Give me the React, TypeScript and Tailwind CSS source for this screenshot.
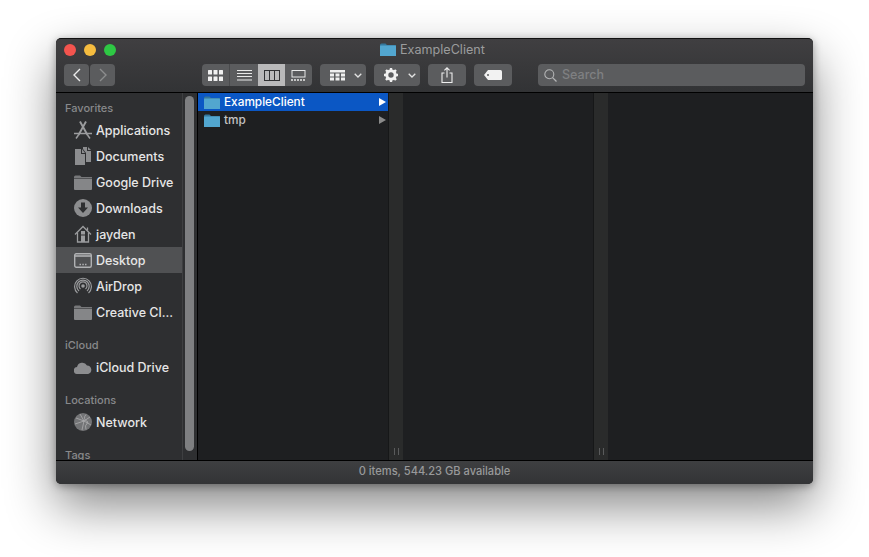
import type { ReactNode } from 'react'

const font = { fontFamily: 'Inter, "Liberation Sans", sans-serif' }

function Folder({ className = '' }: { className?: string }) {
  return (
    <svg viewBox="0 0 16 13" className={className}>
      <path d="M0 2 Q0 .5 1.5 .5 H5.5 L7 2 H16 V13 H0 Z" fill="#34779b" />
      <rect x="0" y="2.6" width="16" height="10.4" rx="0.6" fill="#52a6cf" />
    </svg>
  )
}

function SideFolder() {
  return (
    <svg viewBox="0 0 18 15" className="w-[18px] h-[15px]">
      <path d="M0 2 Q0 .5 1.5 .5 H6 L7.5 2 H18 V3.4 H0 Z" fill="#77787a" />
      <path d="M0 4 H18 V14 Q18 15 17 15 H1 Q0 15 0 14 Z" fill="#858688" />
    </svg>
  )
}

const stroke = '#9b9c9e'

const sideIcons: Record<string, ReactNode> = {
  apps: (
    <svg viewBox="0 0 20 18" className="w-5 h-[18px]" fill="none" stroke={stroke} strokeWidth="1.9">
      <path d="M7 0.5 L14.5 14 M13 0.5 L5.5 14" />
      <path d="M1 12.5 H19" strokeWidth="1.5" />
      <path d="M3 17.5 L5.5 14 M17 17.5 L14.5 14" strokeWidth="1.5" />
    </svg>
  ),
  docs: (
    <svg viewBox="0 0 16 18" className="w-4 h-[18px]">
      <path d="M0 2 H6 V7 H10 V18 H0 Z" fill="#8c8d8f" />
      <path d="M7 2 L10 6 H7 Z" fill="#8c8d8f" />
      <path d="M8 0 H12 V4 H16 V15 H11 V6 L8 2 Z" fill="#8c8d8f" />
      <path d="M13 0 L16 3 H13 Z" fill="#8c8d8f" />
    </svg>
  ),
  folder: <SideFolder />,
  downloads: (
    <svg viewBox="0 0 18 18" className="w-[18px] h-[18px]">
      <circle cx="9" cy="9" r="9" fill="#8c8d8f" />
      <path d="M7 3.5 H11 V8.5 H14 L9 14 L4 8.5 H7 Z" fill="#2e2f31" />
    </svg>
  ),
  home: (
    <svg viewBox="0 0 18 18" className="w-[18px] h-[18px]" fill="none" stroke={stroke} strokeWidth="1.3">
      <path d="M1 9.5 L9 1.5 L17 9.5" />
      <path d="M3.5 7.5 V17 H14.5 V7.5" />
      <path d="M13.5 2.5 V5.5" />
      <rect x="7" y="6" width="4" height="3.5" fill={stroke} stroke="none" />
      <rect x="7" y="10.5" width="4" height="6.5" fill={stroke} stroke="none" />
    </svg>
  ),
  desktop: (
    <svg viewBox="0 0 18 15" className="w-[18px] h-[15px]" fill="none" stroke="#b0b1b3" strokeWidth="1.4">
      <rect x="0.7" y="0.7" width="16.6" height="13.6" rx="1.5" />
      <path d="M1 3 H17" strokeWidth="1.6" />
      <path d="M5.5 11.5 H7 M8.3 11.5 H9.8 M11 11.5 H12.5" strokeWidth="1.5" />
    </svg>
  ),
  airdrop: (
    <svg viewBox="0 0 18 18" className="w-[18px] h-[18px]" fill="none" stroke={stroke} strokeWidth="1.2">
      <circle cx="9" cy="9" r="1.8" fill={stroke} stroke="none" />
      <path d="M6.5 12 A4 4 0 1 1 11.5 12" />
      <path d="M5 14 A6.2 6.2 0 1 1 13 14" />
      <path d="M3.5 16 A8.4 8.4 0 1 1 14.5 16" />
    </svg>
  ),
  cloud: (
    <svg viewBox="0 0 18 13" className="w-[18px] h-[13px]">
      <path d="M3.6 13 A3.5 3.5 0 0 1 3 6 A5.4 5.4 0 0 1 13 4.4 A4.4 4.4 0 0 1 14.2 13 Z" fill="#8c8d8f" />
    </svg>
  ),
  network: (
    <svg viewBox="0 0 18 18" className="w-[18px] h-[18px]" fill="none" stroke="#b4b5b6" strokeWidth="0.7">
      <circle cx="9" cy="9" r="9" fill="#737476" stroke="none" />
      <path d="M2 5 L10 8 L16 4 M10 8 L8 17 M10 8 L17 12 M6 1 L10 8 M1 11 L10 8" />
      <path d="M12 1.5 Q8 6 14 9 Q10 13 12 16.5" />
    </svg>
  ),
}

function ToolButton({ children, className = '' }: { children: ReactNode; className?: string }) {
  return (
    <div className={`h-[22px] rounded-[4px] bg-[#5b5c5e] flex items-center ${className}`}>
      {children}
    </div>
  )
}

function Chevron() {
  return (
    <svg viewBox="0 0 8 5" className="w-2 h-[5px]" fill="none" stroke="#e2e2e2" strokeWidth="1.3">
      <path d="M.7 .7 L4 4 L7.3 .7" />
    </svg>
  )
}

function GridIcon() {
  return (
    <svg viewBox="0 0 15 11" className="w-[15px] h-[11px]" fill="#f0f0f0">
      {[0, 5.5, 11].map(x => [0, 6.5].map(y => <rect key={`${x}-${y}`} x={x} y={y} width="4" height="4.5" rx="0.5" />))}
    </svg>
  )
}

function SideRow({ icon, label, active }: { icon: string; label: string; active?: boolean }) {
  return (
    <div className={`h-[26px] flex items-center shrink-0 ${active ? 'bg-[#505153]' : ''}`}>
      <div className="w-[40px] pl-[17px] flex justify-start items-center">
        <div className="w-[20px] flex justify-center">{sideIcons[icon]}</div>
      </div>
      <span className="text-[12.5px] text-[#e6e6e6] font-medium leading-none pt-[2px]">{label}</span>
    </div>
  )
}

function SideHeader({ label, first }: { label: string; first?: boolean }) {
  return (
    <div className={`shrink-0 pl-[9px] text-[11px] leading-[14px] font-medium text-[#88898b] ${first ? 'h-[24px] pt-[8px]' : 'h-[29px] pt-[13px]'}`}>
      {label}
    </div>
  )
}

function ResizeDivider() {
  return (
    <div className="w-[15px] shrink-0 bg-[#2a2b2b] border-l border-[#161718] flex items-end justify-center pb-[5px] gap-[3px]">
      <div className="w-px h-[7px] bg-[#5a5b5c]" />
      <div className="w-px h-[7px] bg-[#5a5b5c]" />
    </div>
  )
}

function FileRow({ name, selected }: { name: string; selected?: boolean }) {
  return (
    <div className={`h-[18px] flex items-center pl-[6px] pr-[2px] ${selected ? 'bg-[#0b57c4]' : ''}`}>
      <Folder className="w-4 h-[13px] shrink-0" />
      <span className={`ml-1 flex-1 text-[11.8px] leading-none font-medium pt-[2px] ${selected ? 'text-white' : 'text-[#c4c4c4]'}`}>{name}</span>
      <svg viewBox="0 0 7 8" className="w-[7px] h-2">
        <path d="M0 0 L7 4 L0 8 Z" fill={selected ? '#ffffff' : '#8a8a8a'} />
      </svg>
    </div>
  )
}

export default function App() {
  return (
    <div className="w-[869px] h-[557px] bg-white overflow-hidden pt-[38px] pl-[56px]" style={font}>
      <div className="w-[757px] h-[446px] rounded-[5px] overflow-hidden flex flex-col bg-[#1e1f21] border-t border-[#111] shadow-[0_22px_50px_rgba(0,0,0,0.48),0_2px_8px_rgba(0,0,0,0.35)] relative">
        {/* Titlebar + toolbar */}
        <div className="h-[54px] shrink-0 bg-gradient-to-b from-[#403f41] to-[#323335] border-b border-black flex flex-col">
          <div className="h-[24px] flex items-center relative">
            <div className="flex gap-2 pl-2 pb-[3px]">
              <div className="w-3 h-3 rounded-full bg-[#f3544e]" />
              <div className="w-3 h-3 rounded-full bg-[#f5bc3f]" />
              <div className="w-3 h-3 rounded-full bg-[#2ec844]" />
            </div>
            <div className="absolute left-[324px] top-[4px] flex items-center gap-1">
              <Folder className="w-4 h-[13px]" />
              <span className="text-[12.6px] leading-none text-[#9b9c9d] pt-px">ExampleClient</span>
            </div>
          </div>
          <div className="flex items-center pl-2 pr-2 pt-[1px]">
            <div className="flex gap-px">
              <ToolButton className="w-[25px] justify-center">
                <svg viewBox="0 0 8 14" className="w-2 h-[14px]" fill="none" stroke="#ececec" strokeWidth="1.4"><path d="M7 1 L1 7 L7 13" /></svg>
              </ToolButton>
              <ToolButton className="w-[25px] justify-center">
                <svg viewBox="0 0 8 14" className="w-2 h-[14px]" fill="none" stroke="#8c8d8e" strokeWidth="1.4"><path d="M1 1 L7 7 L1 13" /></svg>
              </ToolButton>
            </div>
            <div className="ml-[87px] flex h-[22px] rounded-[4px] overflow-hidden bg-[#5b5c5e]">
              <div className="w-[28px] flex items-center justify-center border-r border-[#4a4b4d]"><GridIcon /></div>
              <div className="w-[28px] flex items-center justify-center">
                <svg viewBox="0 0 15 11" className="w-[15px] h-[11px]" stroke="#e8e8e8" strokeWidth="1"><path d="M0 .5 H15 M0 3.5 H15 M0 6.5 H15 M0 10 H15" /></svg>
              </div>
              <div className="w-[27px] bg-[#b9b9ba] flex items-center justify-center">
                <svg viewBox="0 0 16 11" className="w-4 h-[11px]" fill="none" stroke="#303133" strokeWidth="1"><rect x=".5" y=".5" width="15" height="10" /><path d="M5.5 .5 V10.5 M10.5 .5 V10.5" /></svg>
              </div>
              <div className="w-[27px] flex items-center justify-center">
                <svg viewBox="0 0 15 11" className="w-[15px] h-[11px]"><rect x="1" y=".5" width="13" height="6.5" fill="none" stroke="#e8e8e8" /><path d="M0 10 H15" stroke="#e8e8e8" strokeWidth="1.6" strokeDasharray="2 1" /></svg>
              </div>
            </div>
            <ToolButton className="ml-2 w-[46px] pl-[10px] gap-[9px]">
              <svg viewBox="0 0 15 11" className="w-[15px] h-[11px]" fill="#f0f0f0"><rect width="15" height="2.5" /><rect y="3.5" width="4" height="3" /><rect x="5.5" y="3.5" width="4" height="3" /><rect x="11" y="3.5" width="4" height="3" /><rect y="7.5" width="4" height="3" /><rect x="5.5" y="7.5" width="4" height="3" /><rect x="11" y="7.5" width="4" height="3" /></svg>
              <Chevron />
            </ToolButton>
            <ToolButton className="ml-2 w-[46px] pl-[10px] gap-[10px]">
              <svg viewBox="0 0 14 14" className="w-[14px] h-[14px]">
                <circle cx="7" cy="7" r="4.2" fill="none" stroke="#f0f0f0" strokeWidth="3" />
                <path d="M7 0 V14 M0 7 H14 M2 2 L12 12 M12 2 L2 12" stroke="#f0f0f0" strokeWidth="2.4" strokeDasharray="2.4 9.2 2.4 0" />
              </svg>
              <Chevron />
            </ToolButton>
            <ToolButton className="ml-2 w-[38px] justify-center">
              <svg viewBox="0 0 12 16" className="w-3 h-4" fill="none" stroke="#efefef" strokeWidth="1.1">
                <path d="M3.5 6 H1 V15.5 H11 V6 H8.5" />
                <path d="M6 10.5 V1 M3.4 3.4 L6 .8 L8.6 3.4" />
              </svg>
            </ToolButton>
            <ToolButton className="ml-2 w-[38px] justify-center">
              <svg viewBox="0 0 18 10" className="w-[18px] h-[10px]">
                <path d="M4 0 H16.5 Q18 0 18 1.5 V8.5 Q18 10 16.5 10 H4 L0 5 Z" fill="#f2f2f2" />
                <circle cx="4" cy="5" r="1" fill="#5b5c5e" />
              </svg>
            </ToolButton>
            <ToolButton className="ml-[26px] w-[267px] pl-[6px] gap-[5px]">
              <svg viewBox="0 0 13 13" className="w-[13px] h-[13px]" fill="none" stroke="#b4b5b6" strokeWidth="1.1">
                <circle cx="5.3" cy="5.3" r="4.5" />
                <path d="M8.6 8.6 L12.5 12.5" strokeWidth="1.3" />
              </svg>
              <span className="text-[12.5px] leading-none font-medium text-[#7f8082]">Search</span>
            </ToolButton>
          </div>
        </div>

        {/* Body */}
        <div className="flex-1 min-h-0 flex">
          <div className="w-[142px] shrink-0 flex bg-[#2e2f31] border-r border-black">
            <div className="flex-1 min-w-0 flex flex-col overflow-hidden">
              <SideHeader label="Favorites" first />
              <SideRow icon="apps" label="Applications" />
              <SideRow icon="docs" label="Documents" />
              <SideRow icon="folder" label="Google Drive" />
              <SideRow icon="downloads" label="Downloads" />
              <SideRow icon="home" label="jayden" />
              <SideRow icon="desktop" label="Desktop" active />
              <SideRow icon="airdrop" label="AirDrop" />
              <SideRow icon="folder" label="Creative Cl..." />
              <SideHeader label="iCloud" />
              <SideRow icon="cloud" label="iCloud Drive" />
              <SideHeader label="Locations" />
              <SideRow icon="network" label="Network" />
              <SideHeader label="Tags" />
            </div>
            <div className="w-[15px] shrink-0 border-l border-[#3e3f41] pt-[3px] pb-[9px] pl-[2px] pr-[3px]">
              <div className="h-full rounded-full bg-[#7e7f81]" />
            </div>
          </div>
          <div className="w-[190px] shrink-0 bg-[#1e1f21]">
            <FileRow name="ExampleClient" selected />
            <FileRow name="tmp" />
          </div>
          <ResizeDivider />
          <div className="w-[190px] shrink-0" />
          <ResizeDivider />
          <div className="flex-1" />
        </div>

        {/* Status bar */}
        <div className="h-[24px] shrink-0 border-t border-black bg-gradient-to-b from-[#3e3f41] to-[#333436] flex items-center justify-center pb-[2px]">
          <span className="text-[11.1px] leading-none font-medium text-[#98999a]">0 items, 544.23 GB available</span>
        </div>
      </div>
    </div>
  )
}
